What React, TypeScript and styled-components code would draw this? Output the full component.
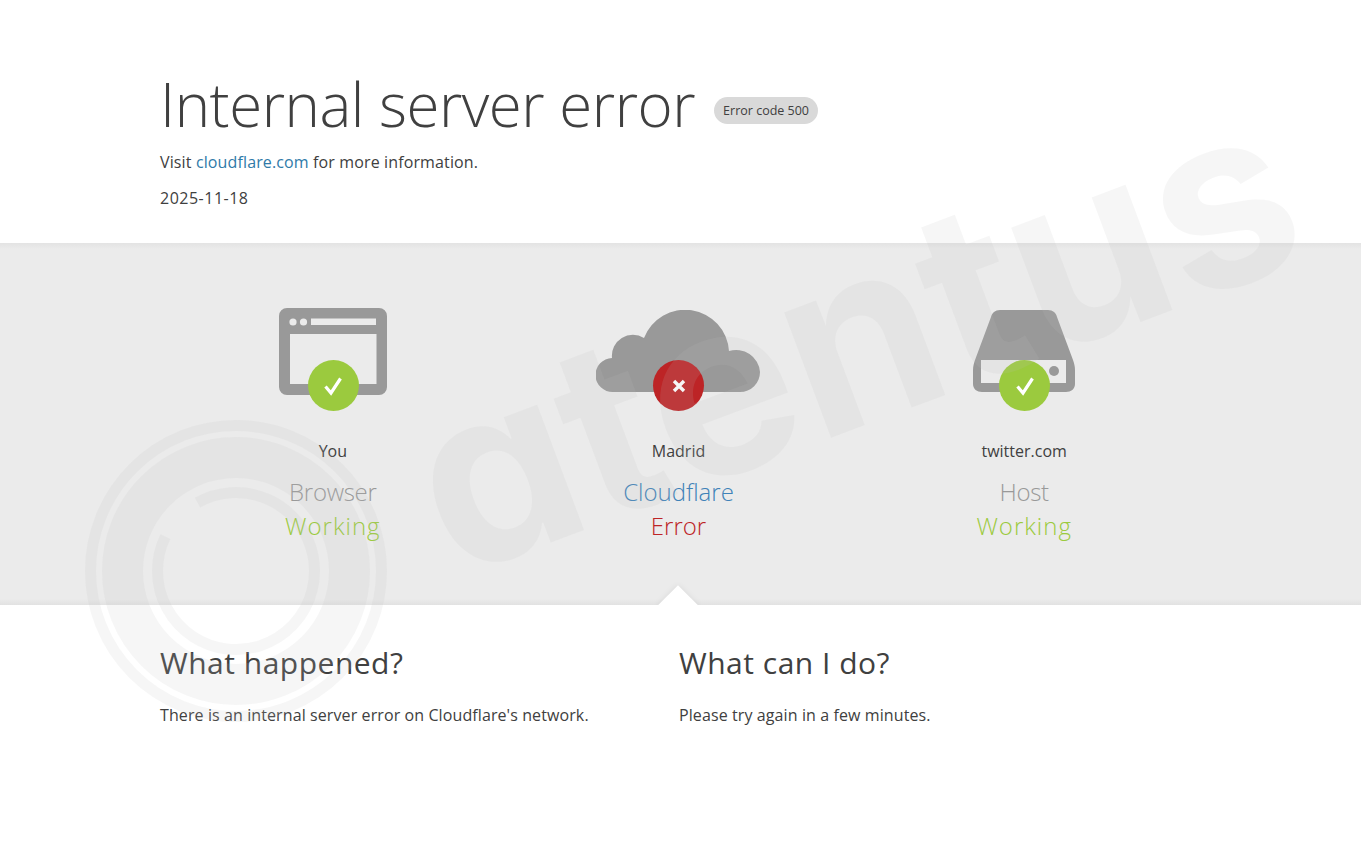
import styled, { createGlobalStyle } from 'styled-components'

const GlobalStyle = createGlobalStyle`
  html, body {
    margin: 0;
    padding: 0;
    background: #fff;
  }

  body {
    font-family: "Open Sans", "Liberation Sans", sans-serif;
    color: #404040;
  }
`

const Page = styled.div`
  position: relative;
  min-height: 865px;
  overflow: hidden;
`

const Wrapper = styled.div`
  width: 1040px;
  margin: 0 auto 0 160px;
`

const Header = styled.header`
  height: 243px;
  padding-top: 67px;
  box-sizing: border-box;
`

const TitleRow = styled.div`
  display: flex;
  align-items: center;
  gap: 19px;
`

const Title = styled.h1`
  margin: 0;
  font-size: 60px;
  line-height: 75px;
  font-weight: 300;
  letter-spacing: -0.48px;
  color: #404040;
`

const CodeBadge = styled.span`
  margin-top: 11px;
  padding: 0 9px;
  height: 27px;
  line-height: 27px;
  border-radius: 14px;
  background: #d9d9d9;
  font-size: 12.5px;
  color: #404040;
`

const InfoLine = styled.p`
  margin: 0;
  font-size: 16px;
  line-height: 24px;
  color: #404040;
`

const VisitLine = styled(InfoLine)`
  margin-top: 8px;
  letter-spacing: 0.13px;
`

const DateLine = styled(InfoLine)`
  margin-top: 12px;
  letter-spacing: 0.5px;
`

const CfLink = styled.a`
  color: #2f7aa8;
  text-decoration: none;
`

const Band = styled.section`
  position: relative;
  height: 362px;
  background:
    linear-gradient(#e3e3e3, #ebebeb 6px, #ebebeb calc(100% - 6px), #e2e2e2);
  overflow: hidden;
`

const Columns = styled.div`
  display: grid;
  grid-template-columns: repeat(3, 1fr);
  width: 1037px;
  margin-left: 160px;
  padding-top: 65px;
`

const Status = styled.div`
  display: flex;
  flex-direction: column;
  align-items: center;
`

const IconBox = styled.div`
  position: relative;
  width: 164px;
  height: 103px;
  display: flex;
  justify-content: center;
`

const StateDot = styled.div<{ $error?: boolean }>`
  position: absolute;
  left: 50%;
  bottom: 0;
  width: 51px;
  height: 51px;
  margin-left: -25px;
  border-radius: 50%;
  background: ${p => (p.$error ? '#bd2426' : '#9bca3e')};
  display: flex;
  align-items: center;
  justify-content: center;
`

const Location = styled.div`
  margin-top: 28px;
  font-size: 16px;
  line-height: 24px;
  color: #404040;
`

const Network = styled.div<{ $accent?: boolean }>`
  margin-top: 12px;
  font-size: 24px;
  line-height: 34px;
  font-weight: 300;
  letter-spacing: ${p => (p.$accent ? '0' : '-0.3px')};
  color: ${p => (p.$accent ? '#3f82b8' : '#999')};
`

const StateText = styled.div<{ $error?: boolean }>`
  font-size: 24px;
  line-height: 34px;
  font-weight: 300;
  letter-spacing: ${p => (p.$error ? '0' : '1px')};
  color: ${p => (p.$error ? '#bd2426' : '#9bca3e')};
`

const Caret = styled.div`
  position: absolute;
  left: 664px;
  bottom: -14px;
  width: 28px;
  height: 28px;
  background: #fff;
  transform: rotate(45deg);
  box-shadow: 0 0 6px rgba(0, 0, 0, 0.08);
`

const Details = styled.section`
  display: grid;
  grid-template-columns: 519px 1fr;
  padding-top: 38px;
`

const DetailTitle = styled.h2`
  margin: 0;
  font-size: 30px;
  line-height: 40px;
  font-weight: 400;
  letter-spacing: 0.5px;
  color: #404040;
`

const DetailText = styled.p`
  margin: 20px 0 0;
  font-size: 16px;
  line-height: 24px;
  letter-spacing: 0.1px;
  color: #404040;
`

const Watermark = styled.div`
  position: absolute;
  inset: 0;
  pointer-events: none;
`

const WatermarkWord = styled.div`
  position: absolute;
  left: 475px;
  top: 336px;
  font-family: "Inter", "Liberation Sans", sans-serif;
  font-size: 245px;
  line-height: 300px;
  font-weight: 700;
  font-feature-settings: "cv11" 1;
  color: rgba(190, 190, 190, 0.14);
  transform: rotate(-20.5deg);
  transform-origin: 0 100%;
  white-space: nowrap;
`

const WatermarkRings = styled.svg`
  position: absolute;
  left: 85px;
  top: 420px;
  width: 302px;
  height: 302px;
`

const Check = () => (
  <svg width="22" height="22" viewBox="0 0 22 22">
    <path d="M3.5 11.5 L9 18 L18.5 3.5" fill="none" stroke="#fff" strokeWidth="3.2" />
  </svg>
)

const Cross = () => (
  <svg width="16" height="16" viewBox="0 0 16 16">
    <path d="M3 3 L13 13 M13 3 L3 13" fill="none" stroke="#fff" strokeWidth="3.4" />
  </svg>
)

const BrowserIcon = () => (
  <svg width="108" height="88" viewBox="0 0 108 88">
    <path
      fillRule="evenodd"
      fill="#999"
      d="M8 0H100a8 8 0 0 1 8 8V79a8 8 0 0 1-8 8H8a8 8 0 0 1-8-8V8a8 8 0 0 1 8-8ZM11 26V76H97.500V26ZM32 10.500V17H97V10.500Z"
    />
    <circle cx="14" cy="14" r="3.600" fill="#ebebeb" />
    <circle cx="24.500" cy="14" r="3.600" fill="#ebebeb" />
  </svg>
)

const CloudIcon = () => (
  <svg width="164" height="84" viewBox="0 0 164 84" style={{ marginTop: 2 }}>
    <path
      fill="#999"
      d="M17 82A17 17 0 0 1 16 48A21 21 0 0 1 48 28A44 44 0 0 1 133 41A24 24 0 0 1 164 62A20 20 0 0 1 144 82Z"
    />
  </svg>
)

const ServerIcon = () => (
  <svg width="102" height="84" viewBox="0 0 102 84" style={{ marginTop: 2 }}>
    <path
      fillRule="evenodd"
      fill="#999"
      d="M27 0H75C80 0 83 3 84 7L100 50C101 53 102 56 102 60V74C102 79 98 82 93 82H9C4 82 0 79 0 74V60C0 56 1 53 2 50L18 7C19 3 22 0 27 0ZM8 50V73H93V50Z"
    />
    <circle cx="81" cy="61" r="5" fill="#999" />
  </svg>
)

const App = () => (
  <>
    <GlobalStyle />
    <Page>
      <Header>
        <Wrapper>
          <TitleRow>
            <Title>Internal server error</Title>
            <CodeBadge>Error code 500</CodeBadge>
          </TitleRow>
          <VisitLine>
            Visit <CfLink href="#">cloudflare.com</CfLink> for more information.
          </VisitLine>
          <DateLine>2025-11-18</DateLine>
        </Wrapper>
      </Header>

      <Band>
        <Columns>
          <Status>
            <IconBox>
              <BrowserIcon />
              <StateDot><Check /></StateDot>
            </IconBox>
            <Location>You</Location>
            <Network>Browser</Network>
            <StateText>Working</StateText>
          </Status>
          <Status>
            <IconBox>
              <CloudIcon />
              <StateDot $error><Cross /></StateDot>
            </IconBox>
            <Location>Madrid</Location>
            <Network $accent>Cloudflare</Network>
            <StateText $error>Error</StateText>
          </Status>
          <Status>
            <IconBox>
              <ServerIcon />
              <StateDot><Check /></StateDot>
            </IconBox>
            <Location>twitter.com</Location>
            <Network>Host</Network>
            <StateText>Working</StateText>
          </Status>
        </Columns>
        <Caret />
      </Band>

      <Wrapper>
        <Details>
          <div>
            <DetailTitle>What happened?</DetailTitle>
            <DetailText>There is an internal server error on Cloudflare's network.</DetailText>
          </div>
          <div>
            <DetailTitle>What can I do?</DetailTitle>
            <DetailText>Please try again in a few minutes.</DetailText>
          </div>
        </Details>
      </Wrapper>

      <Watermark>
        <WatermarkWord>atentus</WatermarkWord>
        <WatermarkRings viewBox="0 0 302 302">
          <circle cx="151" cy="151" r="145.500" fill="none" stroke="rgba(190,190,190,0.14)" strokeWidth="11" />
          <circle cx="151" cy="151" r="113.500" fill="none" stroke="rgba(190,190,190,0.14)" strokeWidth="41" />
          <path
            d="M112.500 82.600A78.500 78.500 0 1 1 80.400 116.700"
            fill="none"
            stroke="rgba(190,190,190,0.14)"
            strokeWidth="11"
          />
        </WatermarkRings>
      </Watermark>
    </Page>
  </>
)

export default App
